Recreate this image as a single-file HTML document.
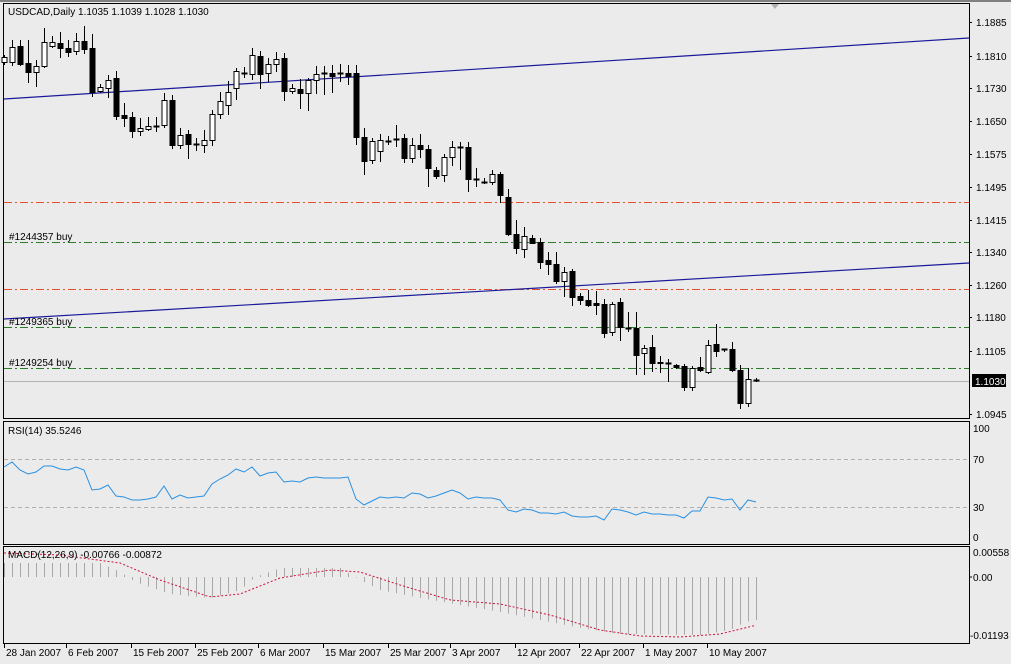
<!DOCTYPE html>
<html><head><meta charset="utf-8"><style>
html,body{margin:0;padding:0;background:#ebebeb;width:1011px;height:664px;overflow:hidden}
svg{display:block}
text{font-family:"Liberation Sans",sans-serif;font-size:10px;fill:#000}
</style></head><body>
<svg id="s" width="1011" height="664" viewBox="0 0 1011 664" xmlns="http://www.w3.org/2000/svg">
<rect x="0" y="0" width="1011" height="664" fill="#ebebeb"/>
<line x1="0" y1="1" x2="1011" y2="1" stroke="#808080" stroke-width="2"/>
<polygon points="771,4 779,4 775,9" fill="#b0b0b0"/>
<!-- panels -->
<rect x="3.5" y="3.5" width="966" height="415" fill="none" stroke="#000"/>
<rect x="3.5" y="421.5" width="966" height="123" fill="none" stroke="#000"/>
<rect x="3.5" y="546.5" width="966" height="97" fill="none" stroke="#000"/>
<!-- horizontal levels -->
<line x1="4" y1="202.5" x2="969" y2="202.5" stroke="#e0502a" stroke-dasharray="8,3,2,3"/>
<line x1="4" y1="289.5" x2="969" y2="289.5" stroke="#e0502a" stroke-dasharray="8,3,2,3"/>
<line x1="4" y1="242.5" x2="969" y2="242.5" stroke="#2a7a2a" stroke-dasharray="8,3,2,3"/>
<line x1="4" y1="327.5" x2="969" y2="327.5" stroke="#2a7a2a" stroke-dasharray="8,3,2,3"/>
<line x1="4" y1="368.5" x2="969" y2="368.5" stroke="#2a7a2a" stroke-dasharray="8,3,2,3"/>
<line x1="4" y1="381.5" x2="969" y2="381.5" stroke="#b4b4b4"/>
<line x1="4" y1="99" x2="969" y2="38" stroke="#1a1a9a" stroke-width="1.2"/>
<line x1="4" y1="319" x2="969" y2="263" stroke="#1a1a9a" stroke-width="1.2"/>
<g id="candles"></g>
<text x="8" y="15">USDCAD,Daily  1.1035 1.1039 1.1028 1.1030</text>
<text x="9" y="240" font-size="9">#1244357 buy</text>
<text x="9" y="325" font-size="9">#1249365 buy</text>
<text x="9" y="366" font-size="9">#1249254 buy</text>
<!-- right axis -->
<g id="axis"></g>
<rect x="972" y="374" width="34" height="13" fill="#000"/>
<text x="975" y="385" style="fill:#fff">1.1030</text>
<!-- RSI -->
<line x1="4" y1="459.5" x2="969" y2="459.5" stroke="#b0b0b0" stroke-dasharray="4,3"/>
<line x1="4" y1="507.5" x2="969" y2="507.5" stroke="#b0b0b0" stroke-dasharray="4,3"/>
<text x="8" y="434">RSI(14) 35.5246</text>
<text x="973" y="432">100</text><text x="973" y="463">70</text><text x="973" y="511">30</text><text x="973" y="541">0</text>
<polyline id="rsi" fill="none" stroke="#2a90e0" stroke-width="1"/>
<!-- MACD -->
<g id="hist"></g>
<polyline id="sig" fill="none" stroke="#d0103a" stroke-width="1" stroke-dasharray="2,2"/>
<text x="8" y="558">MACD(12,26,9) -0.00766 -0.00872</text>
<text x="973" y="556">0.00558</text><text x="973" y="581">0.00</text><text x="970" y="639">-0.01193</text>
<line x1="969" y1="577" x2="972" y2="577" stroke="#000"/>
<!-- dates -->
<g id="dates"></g>
</svg>
<script>
var NS="http://www.w3.org/2000/svg";
function el(p,n,a){var e=document.createElementNS(NS,n);for(var k in a)e.setAttribute(k,a[k]);p.appendChild(e);return e;}
// [x, open, close, high, low] in pixel y
var C=[[4,62,57,55,65],[12,62,47,40,66],[20,46,64,40,66],[28,63,72,40,83],[36,72,66,60,87],[44,66,42,28,68],[52,46,42,36,48],[60,43,48,32,58],[68,48,52,40,57],[76,51,41,33,55],[84,41,49,26,54],[92,48,92,34,97],[100,91,87,84,93],[108,88,80,75,98],[116,78,116,71,120],[124,115,118,103,127],[132,117,131,112,138],[140,131,128,118,136],[148,129,126,117,131],[156,126,126,117,132],[164,125,100,93,128],[172,100,145,95,149],[180,145,135,128,149],[188,134,144,130,159],[196,144,144,138,151],[204,145,140,130,153],[212,140,114,110,146],[220,114,101,92,119],[228,105,92,81,115],[236,88,71,68,100],[244,73,73,67,78],[252,74,55,48,80],[260,56,74,51,89],[268,73,64,58,82],[276,64,59,52,72],[284,58,91,53,101],[292,91,88,84,94],[300,89,93,79,109],[308,93,80,78,111],[316,80,74,66,94],[324,73,73,66,95],[332,73,76,65,93],[340,73,73,64,82],[348,73,76,65,85],[356,73,137,65,145],[364,137,161,128,175],[372,160,141,138,164],[380,151,140,134,162],[388,141,141,136,145],[396,139,139,125,147],[404,138,158,134,163],[412,158,145,138,163],[420,145,149,134,158],[428,149,168,145,187],[436,170,176,167,179],[444,175,157,154,182],[452,157,147,141,166],[460,147,147,142,170],[468,147,179,142,192],[476,179,179,168,187],[484,182,182,178,184],[492,182,174,170,185],[500,174,195,172,203],[508,197,234,189,236],[516,234,248,220,254],[524,249,236,227,258],[532,238,243,235,244],[540,242,262,238,269],[548,260,264,252,275],[556,264,281,252,284],[564,281,272,267,297],[572,271,297,269,306],[580,296,300,293,305],[588,300,305,290,307],[596,303,305,291,315],[604,304,333,299,338],[612,332,304,302,336],[620,302,327,298,341],[628,328,328,312,332],[636,328,355,312,375],[644,353,348,345,375],[652,347,363,335,372],[660,362,363,356,373],[668,363,363,359,382],[676,365,367,364,369],[684,366,387,364,391],[692,387,368,366,391],[700,367,370,357,372],[708,372,345,340,374],[716,344,351,324,357],[724,349,349,349,352],[732,349,370,342,372],[740,370,403,365,409],[748,403,379,368,407],[756,380,380,378,382]];
var g=document.getElementById("candles");
C.forEach(function(c){var x=c[0]+0.5,o=c[1],cl=c[2],h=c[3],l=c[4];
 el(g,"line",{x1:x,y1:h,x2:x,y2:l,stroke:"#000"});
 var t=Math.min(o,cl),b=Math.max(o,cl);
 if(b-t<1){el(g,"line",{x1:x-3,y1:t+0.5,x2:x+3,y2:t+0.5,stroke:"#000","stroke-width":2});}
 else if(cl<o){el(g,"rect",{x:x-2.5,y:t+0.5,width:5,height:b-t,fill:"#fff",stroke:"#000"});}
 else{el(g,"rect",{x:x-3,y:t,width:6,height:b-t+1,fill:"#000"});}
});
var ax=document.getElementById("axis");
[["1.1885",22],["1.1810",56],["1.1730",88],["1.1650",121],["1.1575",154],["1.1495",187],["1.1415",220],["1.1340",252],["1.1260",285],["1.1180",317],["1.1105",351],["1.0945",414]].forEach(function(a){
 el(ax,"line",{x1:969,y1:a[1]+0.5,x2:972,y2:a[1]+0.5,stroke:"#000"});
 var t=el(ax,"text",{x:976,y:a[1]+4});t.textContent=a[0];});
var R=[467,462,470,474,472,466,466,469,470,467,470,490,489,485,496,497,500,500,499,497,486,499,495,498,497,496,484,479,475,469,472,467,476,473,472,482,481,482,478,477,478,478,478,477,499,505,501,497,498,497,498,493,494,498,496,493,490,493,499,497,498,498,500,510,512,509,510,513,513,514,512,516,517,517,516,520,509,510,512,515,512,514,514,515,515,518,511,511,497,498,500,499,510,500,502];
var pts=R.map(function(y,i){return (4+i*8)+","+y;}).join(" ");
document.getElementById("rsi").setAttribute("points",pts);
function interp(P,x){for(var i=0;i<P.length-1;i++){if(x>=P[i][0]&&x<=P[i+1][0]){var t=(x-P[i][0])/(P[i+1][0]-P[i][0]);return P[i][1]+t*(P[i+1][1]-P[i][1]);}}return P[P.length-1][1];}
var HP=[[4,563],[100,563],[120,572],[135,582],[170,594],[210,598],[240,590],[255,577],[280,568],[340,568],[360,580],[380,590],[420,598],[460,605],[500,612],[540,620],[580,628],[620,634],[700,635],[730,630],[745,622],[757,620]];
var SP=[[4,553],[60,555],[120,563],[160,580],[210,597],[240,594],[280,578],[330,570],[360,572],[400,585],[450,600],[500,604],[550,615],[600,630],[640,636],[680,637],[720,634],[757,625]];
var hg=document.getElementById("hist");
for(var x=4;x<=757;x+=8){var v=interp(HP,x);el(hg,"line",{x1:x+0.5,y1:577,x2:x+0.5,y2:v,stroke:"#a8a8a8"});}
var sp=[];for(var x=4;x<=757;x+=4)sp.push(x+","+interp(SP,x).toFixed(1));
document.getElementById("sig").setAttribute("points",sp.join(" "));
var dg=document.getElementById("dates");
[["28 Jan 2007",4],["6 Feb 2007",66],["15 Feb 2007",131],["25 Feb 2007",195],["6 Mar 2007",258],["15 Mar 2007",323],["25 Mar 2007",388],["3 Apr 2007",450],["12 Apr 2007",515],["22 Apr 2007",579],["1 May 2007",643],["10 May 2007",707]].forEach(function(d){
 el(dg,"line",{x1:d[1]+0.5,y1:644,x2:d[1]+0.5,y2:648,stroke:"#000"});
 var t=el(dg,"text",{x:d[1]+2,y:656});t.textContent=d[0];});
</script>
</body></html>
